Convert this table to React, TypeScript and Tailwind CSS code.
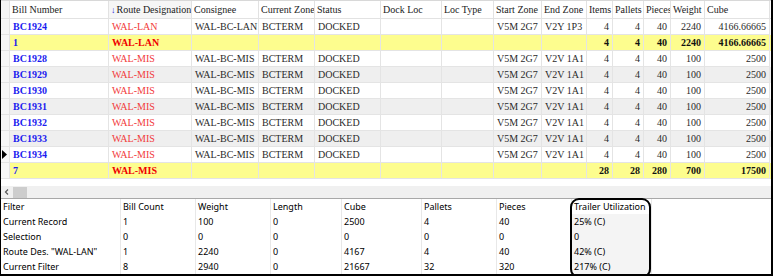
import React from "react";

type Row = {
  bill: string;
  route: string;
  cons?: string;
  zone?: string;
  status?: string;
  start?: string;
  end?: string;
  items: string;
  pallets: string;
  pieces: string;
  weight: string;
  cube: string;
  group?: boolean;
  alt?: boolean;
  current?: boolean;
};

const COLS = [
  { key: "bill", title: "Bill Number", w: "w-[99px]" },
  { key: "route", title: "Route Designation", w: "w-[83px]" },
  { key: "cons", title: "Consignee", w: "w-[67px]" },
  { key: "zone", title: "Current Zone", w: "w-[56px]" },
  { key: "status", title: "Status", w: "w-[66px]" },
  { key: "dock", title: "Dock Loc", w: "w-[61px]" },
  { key: "loc", title: "Loc Type", w: "w-[52px]" },
  { key: "start", title: "Start Zone", w: "w-[48px]" },
  { key: "end", title: "End Zone", w: "w-[45px]" },
  { key: "items", title: "Items", w: "w-[26px]", num: true },
  { key: "pallets", title: "Pallets", w: "w-[31px]", num: true },
  { key: "pieces", title: "Pieces", w: "w-[27px]", num: true },
  { key: "weight", title: "Weight", w: "w-[34px]", num: true },
  { key: "cube", title: "Cube", w: "w-[65px]", num: true },
];

const mis = (bill: string, alt: boolean, current = false): Row => ({
  bill,
  route: "WAL-MIS",
  cons: "WAL-BC-MIS",
  zone: "BCTERM",
  status: "DOCKED",
  start: "V5M 2G7",
  end: "V2V 1A1",
  items: "4",
  pallets: "4",
  pieces: "40",
  weight: "100",
  cube: "2500",
  alt,
  current,
});

const ROWS: Row[] = [
  {
    bill: "BC1924",
    route: "WAL-LAN",
    cons: "WAL-BC-LAN",
    zone: "BCTERM",
    status: "DOCKED",
    start: "V5M 2G7",
    end: "V2Y 1P3",
    items: "4",
    pallets: "4",
    pieces: "40",
    weight: "2240",
    cube: "4166.66665",
  },
  { bill: "1", route: "WAL-LAN", items: "4", pallets: "4", pieces: "40", weight: "2240", cube: "4166.66665", group: true },
  mis("BC1928", false),
  mis("BC1929", true),
  mis("BC1930", false),
  mis("BC1931", true),
  mis("BC1932", false),
  mis("BC1933", true),
  mis("BC1934", false, true),
  { bill: "7", route: "WAL-MIS", items: "28", pallets: "28", pieces: "280", weight: "700", cube: "17500", group: true },
];

const SUM_COLS = [
  { title: "Filter", w: "w-[120px]" },
  { title: "Bill Count", w: "w-[75px]" },
  { title: "Weight", w: "w-[75px]" },
  { title: "Length", w: "w-[71px]" },
  { title: "Cube", w: "w-[80px]" },
  { title: "Pallets", w: "w-[75px]" },
  { title: "Pieces", w: "w-[75px]" },
  { title: "Trailer Utilization", w: "w-[80px]" },
];

const SUM_ROWS = [
  ["Current Record", "1", "100", "0", "2500", "4", "40", "25% (C)"],
  ["Selection", "0", "0", "0", "0", "0", "0", "0"],
  ['Route Des. "WAL-LAN"', "1", "2240", "0", "4167", "4", "40", "42% (C)"],
  ["Current Filter", "8", "2940", "0", "21667", "32", "320", "217% (C)"],
];

function Cell({ row, col }: { row: Row; col: (typeof COLS)[number] }) {
  const value = (row as any)[col.key] ?? "";
  let color = "text-[#2a2a2a]";
  if (col.key === "bill") color = "text-[#1c1cf0] font-bold";
  else if (col.key === "route") color = row.group ? "text-[#f00000] font-bold" : "text-[#f23a3a]";
  else if (row.group) color = "text-[#111] font-bold";

  return (
    <div
      className={`${col.w} h-[16px] shrink-0 overflow-hidden whitespace-nowrap border-r border-b border-[#e4e4e4] leading-[15px] ${
        col.num ? "text-right pr-[3px]" : "pl-[3px]"
      } ${color}`}
    >
      {value}
    </div>
  );
}

export default function App() {
  return (
    <div className="relative w-[773px] h-[276px] overflow-hidden bg-white border-l border-r-2 border-b-2 border-black">
      {/* bill grid */}
      <div className="h-[186px] text-[10px] font-['Liberation_Serif',serif]">
        <div className="flex h-[19px] border-b border-[#e2e2e2] border-t border-t-[#d8d8d8] bg-white text-[#222]">
          <div className="w-[9px] shrink-0 border-r border-[#e2e2e2] bg-[#f4f4f4]" />
          {COLS.map((c) => (
            <div
              key={c.key}
              className={`${c.w} shrink-0 overflow-hidden whitespace-nowrap border-r border-[#e2e2e2] pl-[2px] leading-[17px] ${
                c.key === "route" ? "bg-[#f6f6f6]" : ""
              }`}
            >
              {c.key === "route" && <span className="text-[#2a2ad8] text-[9px] font-bold mr-[1px]">↓</span>}
              {c.title}
            </div>
          ))}
        </div>
        {ROWS.map((r, i) => (
          <div
            key={i}
            className={`flex ${r.group ? "bg-[#fdfd8e]" : r.alt ? "bg-[#efefef]" : "bg-white"}`}
          >
            <div className="w-[9px] h-[16px] shrink-0 flex items-center border-r border-b border-[#e4e4e4] bg-[#f7f7f7]">
              {r.current && (
                <svg width="5" height="9" viewBox="0 0 5 9" className="ml-[1px]">
                  <polygon points="0,0 5,4.5 0,9" fill="#000" />
                </svg>
              )}
            </div>
            {COLS.map((c) => (
              <Cell key={c.key} row={r} col={c} />
            ))}
          </div>
        ))}
      </div>

      {/* horizontal scrollbar */}
      <div className="flex items-center h-[12px] bg-[#f0f0f0]">
        <svg width="10" height="10" viewBox="0 0 10 10" className="ml-[1px]">
          <polyline points="6,2.5 3.5,5 6,7.5" fill="none" stroke="#555" strokeWidth="1.2" />
        </svg>
        <div className="ml-[1px] w-[14px] h-[11px] bg-[#cdcdcd]" />
      </div>

      {/* summary list */}
      <div className="border-t border-[#a8a8a8] font-['Noto_Sans',sans-serif] text-[9px] text-black">
        <div className="flex h-[15px]">
          {SUM_COLS.map((c) => (
            <div key={c.title} className={`${c.w} shrink-0 whitespace-nowrap border-r border-[#e8e8e8] pl-[2px] leading-[15px]`}>
              {c.title}
            </div>
          ))}
        </div>
        {SUM_ROWS.map((row, i) => (
          <div key={i} className="flex h-[15px]">
            {row.map((v, j) => (
              <div
                key={j}
                className={`${SUM_COLS[j].w} shrink-0 whitespace-nowrap border-r border-[#e8e8e8] pl-[2px] leading-[15px] ${
                  j === 7 ? "bg-[#f4f4f4]" : ""
                }`}
              >
                {v}
              </div>
            ))}
          </div>
        ))}
      </div>

      {/* callout around Trailer Utilization */}
      <div className="absolute left-[569px] top-[198px] w-[81px] h-[80px] rounded-[9px] border-2 border-black" />
    </div>
  );
}
